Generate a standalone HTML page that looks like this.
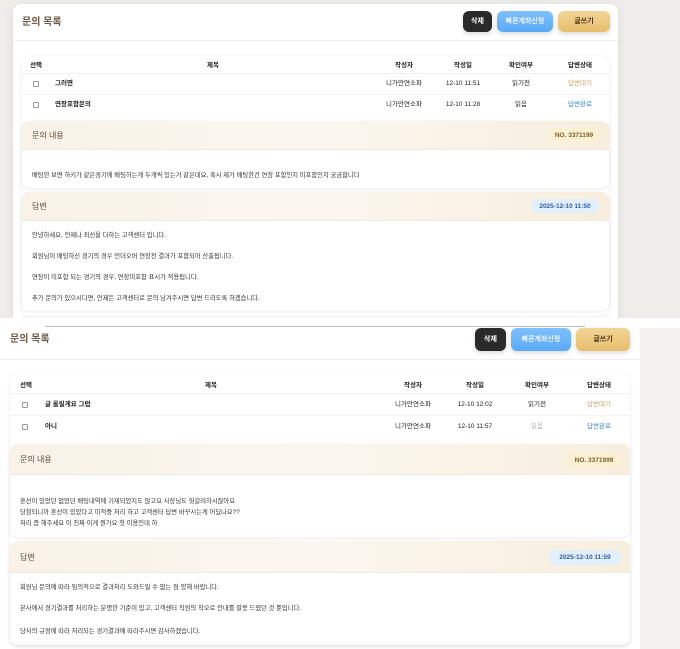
<!DOCTYPE html>
<html><head><meta charset="utf-8"><style>
*{margin:0;padding:0;box-sizing:border-box}
body{width:680px;height:649px;overflow:hidden;background:#fff;font-family:"Liberation Sans","Noto Sans CJK KR",sans-serif;color:#222;position:relative}
.a{position:absolute}
.card{background:#fff;border-radius:8px;box-shadow:0 2px 10px rgba(0,0,0,.08)}
.title{font-size:10px;font-weight:bold;color:#6b5a45;line-height:13px}
.btn{border-radius:6px;font-size:7px;font-weight:bold;display:flex;align-items:center;justify-content:center;box-shadow:0 2px 5px rgba(0,0,0,.15);line-height:9px}
.bk{background:#2a2a2a;color:#fff}
.bl{background:linear-gradient(#7fc0ff,#5aaaf5);color:#eaf4ff}
.go{background:linear-gradient(#f3d597,#e6bd6c);color:#4a3615}
.t{font-size:6.5px;white-space:nowrap;line-height:9px;height:9px}
.b{font-weight:bold}
.cb{width:6px;height:6px;border:1px solid #999;border-radius:1px;background:#fff}
.sec{border-radius:8px;background:#fff;box-shadow:0 1px 4px rgba(0,0,0,.08);overflow:hidden}
.sh{background:linear-gradient(90deg,#f8f2e7,#fbf7f0 50%,#f7eedd);border-bottom:1px solid #f1e9da;position:relative}
.sh span.h{position:absolute;left:10px;font-size:8px;color:#5a4a35;line-height:11px}
.badge{position:absolute;border-radius:8px;font-size:6.5px;font-weight:bold;display:flex;align-items:center;justify-content:center;line-height:9px}
.ny{background:#fbf0d2;color:#7a6030}
.dt{background:#e2efff;color:#2f5fa0}
.line{position:absolute;font-size:6.3px;color:#333;white-space:nowrap;line-height:9px}
.c{text-align:center;transform:translateX(-50%)}
</style></head><body>
<div class="a" style="left:0;top:0;width:680px;height:318px;background:#efedea"></div>
<div class="a card" style="left:13px;top:4px;width:605px;height:320px"></div>
<div class="a title" style="left:22px;top:16px">문의 목록</div>
<div class="a btn bk" style="left:463px;top:11px;width:29px;height:21px">삭제</div>
<div class="a btn bl" style="left:497px;top:11px;width:56px;height:21px">빠른계좌신청</div>
<div class="a btn go" style="left:558px;top:11px;width:52px;height:21px">글쓰기</div>
<div class="a" style="left:13px;top:40px;width:605px;height:1px;background:#f0efed"></div>
<div class="a card" style="left:22px;top:56px;width:587px;height:260px;box-shadow:0 1px 5px rgba(0,0,0,.08)"></div>
<div class="a t b" style="left:30px;top:61px">선택</div>
<div class="a t b c" style="left:213px;top:61px">제목</div>
<div class="a t b c" style="left:404px;top:61px">작성자</div>
<div class="a t b c" style="left:463px;top:61px">작성일</div>
<div class="a t b c" style="left:521px;top:61px">확인여부</div>
<div class="a t b c" style="left:580px;top:61px">답변상태</div>
<div class="a" style="left:22px;top:73px;width:587px;height:1px;background:#f0f0f0"></div>
<div class="a cb" style="left:33px;top:81px"></div>
<div class="a t b" style="left:55px;top:79px">그러면</div>
<div class="a t c" style="left:404px;top:79px">니가만연소파</div>
<div class="a t c" style="left:463px;top:79px">12-10 11:51</div>
<div class="a t c" style="left:521px;top:79px">읽기전</div>
<div class="a t c" style="left:580px;top:79px;color:#c9a46a">답변대기</div>
<div class="a" style="left:22px;top:94px;width:587px;height:1px;background:#f3f3f3"></div>
<div class="a cb" style="left:33px;top:102px"></div>
<div class="a t b" style="left:55px;top:100px">연장포함문의</div>
<div class="a t c" style="left:404px;top:100px">니가만연소파</div>
<div class="a t c" style="left:463px;top:100px">12-10 11:28</div>
<div class="a t c" style="left:521px;top:100px">읽음</div>
<div class="a t c" style="left:580px;top:100px;color:#3d8ad8">답변완료</div>

<div class="a sec" style="left:22px;top:121px;width:587px;height:67px">
 <div class="sh" style="height:29px"><span class="h" style="top:9px">문의 내용</span>
 <div class="badge ny" style="right:10px;top:7px;width:50px;height:14px">NO. 3371199</div></div>
</div>
<div class="line" style="left:32px;top:171px">배팅한 보면 하키가 같은경기에 배팅하는게 두개씩 있는거 같은데요, 혹시 제가 배팅한건 연장 포함인지 미포함인지 궁금합니다</div>
<div class="a sec" style="left:22px;top:192px;width:587px;height:119px">
 <div class="sh" style="height:29px"><span class="h" style="top:9px">답변</span>
 <div class="badge dt" style="right:10px;top:7px;width:68px;height:14px">2025-12-10 11:50</div></div>
</div>
<div class="line" style="left:32px;top:231px">안녕하세요, 언제나 최선을 다하는 고객센터 입니다.</div>
<div class="line" style="left:32px;top:252px">회원님이 배팅하신 경기의 경우 언더오버 연장전 결과가 포함되어 산출됩니다.</div>
<div class="line" style="left:32px;top:273px">연장이 미포함 되는 경기의 경우, 연장미포함 표시가 적용됩니다.</div>
<div class="line" style="left:32px;top:294px">추가 문의가 있으시다면, 언제든 고객센터로 문의 남겨주시면 답변 드리도록 하겠습니다.</div>

<div class="a" style="left:0;top:318px;width:680px;height:331px;background:#fff"></div>
<div class="a" style="left:640px;top:328px;width:40px;height:321px;background:#f3f2f0"></div>
<div class="a" style="left:45px;top:326px;width:540px;height:1px;background:#bdbdbd"></div>
<div class="a title" style="left:10px;top:333px">문의 목록</div>
<div class="a btn bk" style="left:475px;top:328px;width:31px;height:23px">삭제</div>
<div class="a btn bl" style="left:511px;top:328px;width:60px;height:23px">빠른계좌신청</div>
<div class="a btn go" style="left:576px;top:328px;width:54px;height:23px">글쓰기</div>
<div class="a" style="left:0;top:359px;width:640px;height:1px;background:#f0efed"></div>
<div class="a card" style="left:10px;top:375px;width:620px;height:270px;box-shadow:0 1px 5px rgba(0,0,0,.08)"></div>
<div class="a t b" style="left:20px;top:381px">선택</div>
<div class="a t b c" style="left:211px;top:381px">제목</div>
<div class="a t b c" style="left:413px;top:381px">작성자</div>
<div class="a t b c" style="left:475px;top:381px">작성일</div>
<div class="a t b c" style="left:537px;top:381px">확인여부</div>
<div class="a t b c" style="left:599px;top:381px">답변상태</div>
<div class="a" style="left:10px;top:393px;width:620px;height:1px;background:#f0f0f0"></div>
<div class="a cb" style="left:22px;top:402px"></div>
<div class="a t b" style="left:45px;top:400px">글 올릴게요 그럼</div>
<div class="a t c" style="left:413px;top:400px">니가만연소파</div>
<div class="a t c" style="left:475px;top:400px">12-10 12:02</div>
<div class="a t c" style="left:537px;top:400px">읽기전</div>
<div class="a t c" style="left:599px;top:400px;color:#c9a46a">답변대기</div>
<div class="a" style="left:10px;top:415px;width:620px;height:1px;background:#f3f3f3"></div>
<div class="a cb" style="left:22px;top:424px"></div>
<div class="a t b" style="left:45px;top:422px">아니</div>
<div class="a t c" style="left:413px;top:422px">니가만연소파</div>
<div class="a t c" style="left:475px;top:422px">12-10 11:57</div>
<div class="a t c" style="left:537px;top:422px;color:#aaa">읽음</div>
<div class="a t c" style="left:599px;top:422px;color:#3d8ad8">답변완료</div>

<div class="a sec" style="left:10px;top:444px;width:620px;height:93px">
 <div class="sh" style="height:31px"><span class="h" style="top:10px">문의 내용</span>
 <div class="badge ny" style="right:9px;top:9px;width:54px;height:14px">NO. 3371999</div></div>
</div>
<div class="line" style="left:20px;top:497px">훈선이 있었던 없었던 배팅내역에 기재되었지도 않고요 사장님도 헛갈려하시잖아요</div>
<div class="line" style="left:20px;top:508px">당첨되니까 훈선이 있었다고 미적중 처리 하고 고객센터 답변 바꾸시는게 어딨나요??</div>
<div class="line" style="left:20px;top:519px">처리 좀 해주세요 이 진짜 이게 뭔가요 첫 이용인데 하</div>
<div class="a sec" style="left:10px;top:541px;width:620px;height:104px">
 <div class="sh" style="height:32px"><span class="h" style="top:11px">답변</span>
 <div class="badge dt" style="right:9px;top:9px;width:72px;height:15px">2025-12-10 11:59</div></div>
</div>
<div class="line" style="left:20px;top:583px">회원님 문의에 따라 임의적으로 결과처리 도와드릴 수 없는 점 양해 바랍니다.</div>
<div class="line" style="left:20px;top:604px">본사에서 경기결과를 처리하는 분명한 기준이 있고, 고객센터 직원의 착오로 안내를 잘못 드렸던 것 뿐입니다.</div>
<div class="line" style="left:20px;top:627px">당사의 규정에 따라 처리되는 경기결과에 따라주시면 감사하겠습니다.</div>
</body></html>
